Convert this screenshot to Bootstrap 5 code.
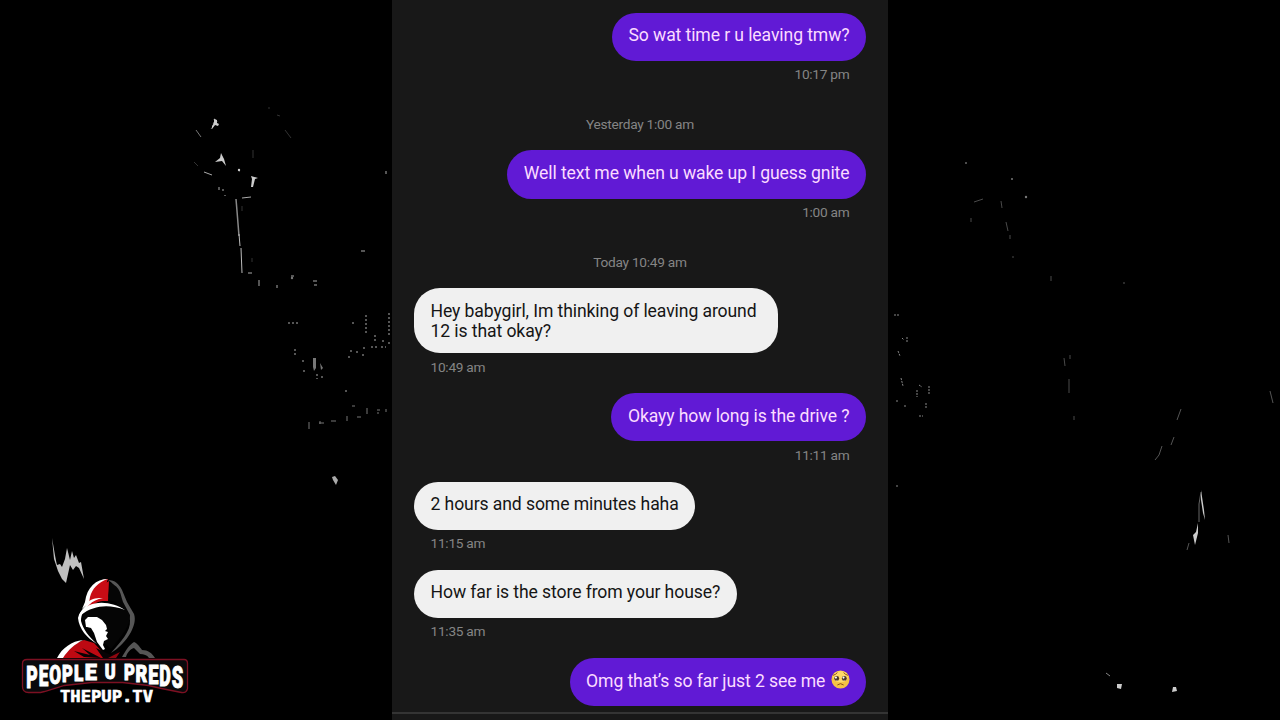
<!DOCTYPE html>
<html lang="en">
	<head>
		<meta charset="UTF-8" />
		<meta name="viewport" content="width=device-width, initial-scale=1.0" />
		<title>Chat</title>
		<link
			href="https://cdn.jsdelivr.net/npm/bootstrap@5.3.3/dist/css/bootstrap.min.css"
			rel="stylesheet"
		/>
		<style>
			body {
				background: #000;
				font-family: Roboto, "Liberation Sans", sans-serif;
			}
			.stage {
				height: 720px;
			}
			.backdrop {
				position: absolute;
				inset: 0;
			}
			.chat {
				position: relative;
				width: 496px;
				background: #181818;
				padding: 12.6px 22px 0;
			}
			.bubble {
				min-height: 48.2px;
				padding: 12.5px 16.5px 11.6px;
				border-radius: 26px;
				font-size: 17.6px;
				line-height: 20.4px;
				letter-spacing: -0.1px;
				white-space: nowrap;
			}
			.sent {
				background: #611ad5;
				color: #fbdcff;
			}
			.received {
				background: #f0f0f0;
				color: #151515;
			}
			.two-line {
				width: 364px;
			}
			.time,
			.day {
				color: #858585;
				font-size: 13.7px;
				line-height: 20px;
				letter-spacing: -0.27px;
			}
			.time {
				margin: 3.4px 16.5px 16.7px;
			}
			.day {
				margin: 13px 0 16.6px;
			}
			.input-edge {
				height: 2px;
				margin: 6px -22px 0;
				background: #343434;
			}
			.emoji {
				width: 19px;
				height: 19px;
				margin: -4px 0 0 1px;
			}
		</style>
	</head>
	<body>
		<div class="stage position-relative overflow-hidden d-flex justify-content-center">
			<!-- Backdrop highlights and channel logo -->
			<svg class="backdrop" width="1280" height="720" viewBox="0 0 1280 720">
				<g fill="none" stroke="#aaa" stroke-width="1">
					<path d="M196 130l5 7M211 129l4-5" stroke="#777" />
					<path d="M214 119l3 3M213 123l4 1M236 199l1 12M237 211l2 25" stroke="#888" stroke-width="1.5" />
					<path d="M239 234l1 12M241 248l1 25" stroke="#bbb" />
					<path d="M204 172l8 3M219 187v3M223 189v2M225 195v1M242 198l9-1M248 273h4M259 280v6M291 276h3M277 285v3M313 281h4M314 285h3M386 171v3M361 251h4M238 170l2 1" />
					<path d="M268 108h2M277 115l3 1M285 130l6 8M253 150v8M194 162l4 4M242 206v5M252 258v4" stroke="#333" />
					<path d="M352 323h3M366 315v20M389 313v24M375 335v6M383 340v3M371 347h6M381 347h5M351 350v3M357 351v4M362 355h3M363 348h3M389 342v4M295 349v7M303 360v3M304 370v4M317 374v5M322 376v2M348 357h4M346 390v2M288 323h12" stroke-dasharray="2 2" />
					<path d="M319 423h5M331 421h5M347 416v5M357 417h4M377 410h3M377 413h2M386 409v3M309 422v7M320 421v3M352 406h3M367 408v6" stroke="#777" />
					<path d="M1001 201l1 7M1006 222l2 9M1010 235v4M1012 257h2M1051 276v5M974 202l9-3M971 218v4M1064 358l1 8M1070 355v4M1069 379v14M1074 416v4" stroke="#4a4a4a" />
					<path d="M894 315h5M902 338l2 2M907 337v5M898 351l2 5M901 378l2 8M919 385l3 2M917 390v7M929 386v8M896 401h3M905 405v3M926 403v5M919 416h4M896 486h3" stroke="#888" stroke-dasharray="2 1" />
					<path d="M1181 409l-4 11M1174 437l-3 8M1162 446l-3 9-4 5M1270 391l3 12M1228 535l1 8M1189 543l-2 7M1124 282v2" stroke="#555" />
					<path d="M1106 673l4 3" stroke="#888" />
					<path d="M1201 492l-2 12v18" stroke="#666" />
				</g>
				<g fill="#ccc">
					<path d="M214 119l3 1v3l2 1-1 2-3-1-3 4v-3l2-3zM221 153l3 6 2 7-4-5-7 1 5-4zM251 176l7 2-3 1-2 8h-2l1-8z" />
					<path d="M1201 490l3 20 1 10-2-7-2-13zM1198 523v10l-3 12-2-10 3-3z" />
					<path d="M1117 684h5l-1 5-4-1zM1173 687h3l1 4-5 1z" />
					<path d="M313 358h3v10l-2 3-1-4zM320 363l3 5-2 2z" fill="#777" />
					<path d="M332 477l3-1 3 4-2 5-3-5z" fill="#aaa" />
					<circle cx="239" cy="170" r="1.2" />
					<circle cx="292" cy="278" r="1.2" fill="#777" />
					<circle cx="966" cy="163" r="1" fill="#666" />
					<circle cx="1012" cy="179" r="1" fill="#777" />
					<circle cx="1026" cy="197" r="1.2" fill="#777" />
				</g>
				<path d="M52 538c2 11 3 18 5 27l3-1 2 3 3-8 2-11 3 12 2-9 2 7 2-3 3 8 2-1 3 17-5-11-3-2-3 4-3-5-2 9-2 9-4-4-4-8-4-12z" fill="#c0c0c0" />

				<!-- Hooded figure -->
				<path d="M85 606C87 590 96 580 108 579c-3 6-1 12 1 21l-13 2-8 5z" fill="#c90c15" />
				<path d="M108 579c-12 0-21 8-23 23l-3 7 7-6 1-6c2-8 8-15 18-18z" fill="#fff" />
				<path d="M98 588l11-7-1 20-8 0-8 4z" fill="#c90c15" />
				<path d="M108 580c7 0 11 4 14 10l5 12 7 12c2 6 0 12-3 18-5 9-12 16-20 21 9-11 20-21 19-33l-6-11-7-6c4-9 0-17-9-23z" fill="#565656" />
				<path d="M110 583c11 4 10 11 13 19l7 13c1 10-9 22-19 34-8-9-28-21-28-33 7-12 22-11 38-7l-5-7-8-2z" fill="#050505" />
				<path d="M88 602c4-4 10-4 15-4-6 1-10 3-14 7-5 5-8 9-8 16 2 8 8 16 16 23-10-6-18-15-19-26 2-8 7-10 10-16z" fill="#fff" />
				<path d="M79 615c9-17 33-14 46-5-16-6-31-5-44 5z" fill="#fff" />
				<path d="M91 617l6 0 5 3 4 5 1 4-2 2 3 1-2 4 2 3-4 2-1 4 2 4-2 1-6-8-3-9-3-5-4-1-1 0-1-7 3-3z" fill="#fff" />
				<path d="M61 657c5-8 14-14 23-17l10 3 14 15-50 0z" fill="#bd0912" />
				<path d="M57 658c5-10 15-17 26-18-8 4-15 10-20 18z" fill="#fff" />
				<path d="M84 657l-10-6 16 4-8-7 19 10zM103 658l-7-10 15 7 9-6-6 9z" fill="#080305" />
				<path d="M108 658l12-6-4 6z" fill="#8e0710" />
				<path d="M122 657c4-7 7-12 12-15 3 1 6 5 8 8 6 0 10 3 13 8h-6c-2-3-5-4-9-4l-6-6c-4 1-7 5-8 9z" fill="#555" />

				<!-- Wordmark plate -->
				<path d="M27 659.500h157q3.500 0 3.500 4v25q-1 5-6 4l-20-4-13-3-26-3h-31l-27 3-20 6-4 1h-12q-6 0-6-6v-23q0-4 4.500-4z" fill="#0a0a0c" stroke="#7c1022" stroke-width="1.300" />
				<g fill="#fff" stroke="#fff" stroke-width="1" font-family="Roboto, sans-serif" font-weight="900">
					<!-- letters shrink towards the middle of the arch -->
					<g transform="scale(.62 1)">
						<text>
							<tspan x="42.500" y="688" font-size="31.500" textLength="18.500" lengthAdjust="spacingAndGlyphs">P</tspan><tspan x="62.500" y="686" font-size="29" textLength="15.500" lengthAdjust="spacingAndGlyphs">E</tspan><tspan x="79.500" y="684" font-size="26.500" textLength="19" lengthAdjust="spacingAndGlyphs">O</tspan><tspan x="100" y="682.500" font-size="24.500" textLength="17.500" lengthAdjust="spacingAndGlyphs">P</tspan><tspan x="119.500" y="681" font-size="22.500" textLength="15" lengthAdjust="spacingAndGlyphs">L</tspan><tspan x="136.500" y="680" font-size="21.500" textLength="19.500" lengthAdjust="spacingAndGlyphs">E</tspan>
						</text>
						<text x="169" y="679" font-size="20.500" textLength="17.500" lengthAdjust="spacingAndGlyphs">U</text>
						<text>
							<tspan x="200" y="680" font-size="21.500" textLength="17.500" lengthAdjust="spacingAndGlyphs">P</tspan><tspan x="218.500" y="682" font-size="24" textLength="19" lengthAdjust="spacingAndGlyphs">R</tspan><tspan x="239" y="684" font-size="26.500" textLength="16.500" lengthAdjust="spacingAndGlyphs">E</tspan><tspan x="257" y="686" font-size="29" textLength="18.500" lengthAdjust="spacingAndGlyphs">D</tspan><tspan x="277" y="688" font-size="31" textLength="18.500" lengthAdjust="spacingAndGlyphs">S</tspan>
						</text>
					</g>
					<text x="60" y="701.500" font-size="15" textLength="93" lengthAdjust="spacingAndGlyphs" font-family="'DejaVu Sans Mono', monospace" font-weight="bold" stroke-width=".6">THEPUP.TV</text>
				</g>
			</svg>

			<!-- Conversation -->
			<main class="chat d-flex flex-column">
				<div class="bubble sent align-self-end">So wat time r u leaving tmw?</div>
				<div class="time text-end">10:17 pm</div>

				<div class="day text-center">Yesterday 1:00 am</div>
				<div class="bubble sent align-self-end">Well text me when u wake up I guess gnite</div>
				<div class="time text-end">1:00 am</div>

				<div class="day text-center">Today 10:49 am</div>
				<div class="bubble received two-line align-self-start">Hey babygirl, Im thinking of leaving around<br />12 is that okay?</div>
				<div class="time">10:49 am</div>

				<div class="bubble sent align-self-end">Okayy how long is the drive ?</div>
				<div class="time text-end">11:11 am</div>

				<div class="bubble received align-self-start">2 hours and some minutes haha</div>
				<div class="time">11:15 am</div>

				<div class="bubble received align-self-start">How far is the store from your house?</div>
				<div class="time">11:35 am</div>

				<div class="bubble sent align-self-end">
					Omg that’s so far just 2 see me
					<svg class="emoji" viewBox="0 0 20 20">
						<circle cx="10" cy="10" r="9.500" fill="#f6c343" />
						<ellipse cx="10" cy="7" rx="8" ry="6" fill="#ffda68" />
						<circle cx="6" cy="9" r="2.600" fill="#4b3828" />
						<circle cx="14" cy="9" r="2.600" fill="#4b3828" />
						<circle cx="5.200" cy="8" r="1.100" fill="#fff" />
						<circle cx="13.200" cy="8" r="1.100" fill="#fff" />
						<path d="M5 11h2M13 11h2" stroke="#b89a77" />
						<path d="M2.500 5.500Q5 5 6.500 3M17.500 5.500Q15 5 13.500 3M7 15.500q3-2.500 6 0" fill="none" stroke="#8a4b1c" stroke-linecap="round" />
					</svg>
				</div>
				<div class="input-edge"></div>
			</main>
		</div>
		<script src="https://cdn.jsdelivr.net/npm/bootstrap@5.3.3/dist/js/bootstrap.bundle.min.js"></script>
	</body>
</html>
